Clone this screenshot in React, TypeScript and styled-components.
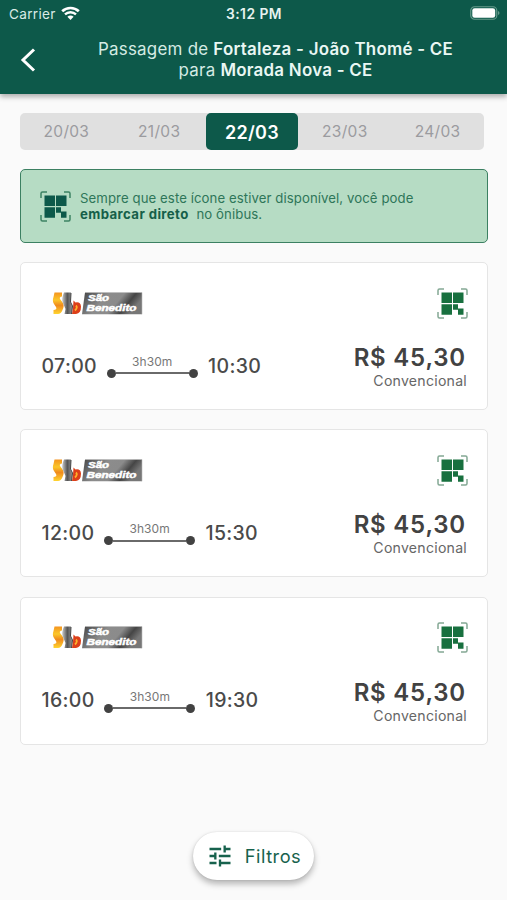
import React from 'react';
import styled, { createGlobalStyle } from 'styled-components';
import { MdTune } from 'react-icons/md';

const GlobalStyle = createGlobalStyle`
  * { box-sizing: border-box; }
  body {
    margin: 0;
    background: #fafafa;
    font-family: Inter, "Liberation Sans", sans-serif;
    color: #424242;
  }
`;

const Screen = styled.div`
  display: flex;
  flex-direction: column;
  width: 507px;
  height: 900px;
  overflow: hidden;
  background: #fafafa;
`;

const Header = styled.header`
  flex: none;
  height: 94px;
  background: #0d594a;
  color: #fff;
  box-shadow: 0 3px 5px rgba(0, 0, 0, 0.3);
`;

const StatusBar = styled.div`
  display: grid;
  grid-template-columns: 1fr auto 1fr;
  align-items: center;
  height: 27px;
  padding: 0 8px 0 9px;
  font-size: 13px;
  line-height: 16px;
`;

const Carrier = styled.div`
  display: flex;
  align-items: center;
  gap: 5.5px;
  font-size: 13.6px;
  letter-spacing: 0.3px;
  color: #d9ebe6;
`;

const Clock = styled.div`
  font-size: 13.8px;
  font-weight: 600;
  letter-spacing: 0.5px;
  color: #e6f3f0;
`;

const BatterySlot = styled.div`
  display: flex;
  justify-content: flex-end;
  margin-top: -1px;
  margin-right: -1px;
`;

const TitleBar = styled.div`
  display: grid;
  grid-template-columns: 55px 1fr 11px;
  align-items: center;
  height: 66px;
`;

const BackButton = styled.button`
  display: flex;
  justify-content: center;
  padding: 0;
  border: 0;
  background: none;
`;

const Title = styled.h1`
  margin: 0;
  padding-bottom: 1px;
  text-align: center;
  font-size: 16.9px;
  font-weight: 400;
  line-height: 21px;
  letter-spacing: 0.26px;
  color: #d5ebe4;
  b { font-weight: 600; color: #e9f7f3; }
`;

const Main = styled.main`
  display: flex;
  flex-direction: column;
  flex: 1;
  padding: 19px 20px 0;
`;

const DateTabs = styled.nav`
  display: grid;
  grid-template-columns: repeat(5, 1fr);
  width: 464px;
  height: 37px;
  background: #e0e0e0;
  border-radius: 5px;
`;

const DateTab = styled.button<{ $active?: boolean }>`
  padding: ${p => (p.$active ? '2px' : '0')} 0 0;
  border: 0;
  border-radius: 5px;
  font-family: inherit;
  background: ${p => (p.$active ? '#0d594a' : 'transparent')};
  color: ${p => (p.$active ? '#fff' : '#9b9b9f')};
  font-size: ${p => (p.$active ? '18px' : '15.5px')};
  font-weight: ${p => (p.$active ? 600 : 400)};
  letter-spacing: 0.3px;
`;

const Notice = styled.section`
  display: flex;
  align-items: center;
  gap: 9px;
  height: 74px;
  margin-top: 19px;
  padding: 0 19px;
  width: 468px;
  border: 1.5px solid #3c8062;
  border-radius: 5px;
  background: #b6dcc4;
  color: #2e7659;
`;

const NoticeText = styled.p`
  margin: 0 0 1px;
  font-size: 13.2px;
  line-height: 16px;
  white-space: nowrap;
  letter-spacing: 0.08px;
  b { font-weight: 700; color: #155f49; margin-right: 4px; letter-spacing: 0.4px; }
`;

const TripList = styled.div`
  display: flex;
  flex-direction: column;
  gap: 19.3px;
  margin-top: 19px;
`;

const TripCard = styled.article`
  width: 468px;
  height: 148px;
  padding: 24px 19px 0 20px;
  border: 1.5px solid #e5e5e5;
  border-radius: 5px;
  background: #fff;
`;

const CardTop = styled.div`
  display: flex;
  justify-content: space-between;
  align-items: center;
  height: 32px;
  padding-left: 10.5px;
`;

const CardBottom = styled.div`
  display: flex;
  justify-content: space-between;
  margin-top: 26px;
`;

const Schedule = styled.div`
  display: flex;
  align-items: flex-start;
  padding: 7.7px 0 0 0.5px;
`;

const Time = styled.span`
  font-size: 19.5px;
  font-weight: 500;
  line-height: 26px;
  letter-spacing: 0.35px;
  color: #4a4a4a;
`;

const Duration = styled.div`
  display: flex;
  flex-direction: column;
  align-items: center;
  width: 91px;
  margin: 2.3px 10.3px 0 9.7px;
  font-size: 12px;
  line-height: 14px;
  letter-spacing: 0.1px;
  color: #777;
`;

const Track = styled.div`
  display: flex;
  align-items: center;
  width: 100%;
  height: 9px;
`;

const Dot = styled.i`
  width: 9px;
  height: 9px;
  border-radius: 50%;
  background: #424242;
`;

const Line = styled.i`
  flex: 1;
  height: 2px;
  background: #6a6a6a;
`;

const Fare = styled.div`
  display: flex;
  flex-direction: column;
  align-items: flex-end;
  padding-top: 1px;
`;

const Price = styled.strong`
  font-size: 24px;
  font-weight: 600;
  line-height: 24px;
  letter-spacing: 0.8px;
  margin-right: 2px;
  color: #424242;
`;

const FareClass = styled.span`
  font-size: 14.1px;
  line-height: 21px;
  letter-spacing: 0.25px;
  margin-right: 1px;
  color: #666;
`;

const FilterButton = styled.button`
  display: flex;
  align-items: center;
  align-self: center;
  justify-content: center;
  gap: 11px;
  width: 121px;
  height: 48px;
  margin-top: 87px;
  padding: 0;
  border: 0;
  border-radius: 24px;
  background: #fff;
  box-shadow: 0 4px 6px rgba(0, 0, 0, 0.28), 0 0 2px rgba(0, 0, 0, 0.12);
  color: #17624d;
  font-family: inherit;
  font-size: 18.2px;
  letter-spacing: 0.5px;
`;

const WifiIcon = () => (
  <svg width="19" height="15" viewBox="0 0 19 15" fill="none" stroke="#fff">
    <path d="M1.2 5.3C5.8.9 13.2.9 17.8 5.3" strokeWidth="2.7" />
    <path d="M4 8.4C7.1 5.5 11.9 5.5 15 8.4" strokeWidth="2.4" />
    <path d="M6.4 10.8C8.2 9.2 10.8 9.2 12.6 10.8L9.5 14Z" fill="#fff" stroke="none" />
  </svg>
);

const BatteryIcon = () => (
  <svg width="30" height="14" viewBox="0 0 30 14">
    <rect x="0.75" y="0.75" width="26" height="12.5" rx="3.8" fill="none" stroke="#659a8b" strokeWidth="1.2" />
    <rect x="2.3" y="2.3" width="22.9" height="9.4" rx="2.3" fill="#fff" />
    <path d="M28 5c2 .8 2 3.2 0 4z" fill="#659a8b" />
  </svg>
);

const BackIcon = () => (
  <svg width="16" height="25" viewBox="0 0 16 25" fill="none" stroke="#fff" strokeWidth="3">
    <path d="M14 1.5L3 12L14 22.5" />
  </svg>
);

const CodeIcon = ({ color, frame }: { color: string; frame: string }) => (
  <svg width="31" height="31" viewBox="0 0 31 31">
    <path
      d="M1 7V2.5Q1 1 2.5 1H7M24 1h4.5Q30 1 30 2.5V7M30 24v4.5Q30 30 28.5 30H24M7 30H2.5Q1 30 1 28.5V24"
      fill="none"
      stroke={frame}
      strokeWidth="1.5"
    />
    <path
      d="M4.5 4.5h10.5v10.5H4.5zM16 4.5h10.5v10.5H16zM4.5 16.2h10.5v10.5H4.5zM16 16.2h5v4.2h5.5v6.3h-5.5v-5H16z"
      fill={color}
    />
  </svg>
);

const CompanyLogo = () => (
  <svg width="91" height="25" viewBox="0 0 91 25" role="img" aria-label="São Benedito">
    <defs>
      <linearGradient id="plate" x1="0" x2="1" y1="0" y2="0.3">
        <stop offset="0" stopColor="#444" />
        <stop offset="0.42" stopColor="#8c8c8c" />
        <stop offset="0.66" stopColor="#8b8b8b" />
        <stop offset="0.84" stopColor="#454545" />
        <stop offset="1" stopColor="#777" />
      </linearGradient>
      <linearGradient id="flame" x1="0" x2="0" y1="0" y2="1">
        <stop offset="0" stopColor="#f4941f" />
        <stop offset="0.35" stopColor="#fbc72b" />
        <stop offset="0.6" stopColor="#f08a1d" />
        <stop offset="1" stopColor="#ffd52f" />
      </linearGradient>
      <linearGradient id="steel" x1="0" x2="1">
        <stop offset="0" stopColor="#c9c9c9" />
        <stop offset="0.5" stopColor="#555" />
        <stop offset="1" stopColor="#999" />
      </linearGradient>
    </defs>
    <path d="M2.5 1.5h7.500v4q-3 .5-2 2.500l3 4q1.500 3-.5 7-1.500 4-4.500 4H1.500v-4q4-.5 2.500-3l-2-3q-2-3-.5-7z" fill="url(#flame)" />
    <path d="M12 1.500h7l-.5 10 2 4-1 7.500h-7l1-5-3-7q-1-4 1.500-9.500z" fill="url(#steel)" />
    <path d="M19 2l-.5 9 2 4-1 8" fill="none" stroke="#444" />
    <path d="M21.500 9.500l2 2q5-1 5.500 4 0 7-5 7.500h-4l1-6z" fill="#dc3f19" />
    <path d="M24 14.500q2 2-1 5" fill="none" stroke="#ffb12b" strokeWidth="1.8" />
    <path d="M33 1.500h57v21.700H30z" fill="url(#plate)" />
    <path d="M33 1.500h57v21.700" fill="none" stroke="#bbb" strokeWidth=".6" />
    <g
      fill="#fff"
      stroke="#fff"
      strokeWidth=".45"
      fontFamily="Liberation Sans, sans-serif"
      fontWeight="700"
      fontStyle="italic"
      fontSize="8.6"
    >
      <text x="36" y="9.8" textLength="21" lengthAdjust="spacingAndGlyphs">São</text>
      <text x="34.5" y="19.7" textLength="50" lengthAdjust="spacingAndGlyphs">Benedito</text>
    </g>
  </svg>
);

const dates = ['20/03', '21/03', '22/03', '23/03', '24/03'];

const trips = [
  { departure: '07:00', arrival: '10:30' },
  { departure: '12:00', arrival: '15:30' },
  { departure: '16:00', arrival: '19:30' },
];

export default function App() {
  return (
    <Screen>
      <GlobalStyle />
      <Header>
        <StatusBar>
          <Carrier>Carrier <WifiIcon /></Carrier>
          <Clock>3:12 PM</Clock>
          <BatterySlot><BatteryIcon /></BatterySlot>
        </StatusBar>
        <TitleBar>
          <BackButton aria-label="Voltar"><BackIcon /></BackButton>
          <Title>
            Passagem de <b>Fortaleza - João Thomé - CE</b><br />
            para <b>Morada Nova - CE</b>
          </Title>
        </TitleBar>
      </Header>
      <Main>
        <DateTabs>
          {dates.map(date => (
            <DateTab key={date} $active={date === '22/03'}>{date}</DateTab>
          ))}
        </DateTabs>
        <Notice>
          <CodeIcon color="#0d594a" frame="#3d8263" />
          <NoticeText>
            Sempre que este ícone estiver disponível, você pode<br />
            <b>embarcar direto</b> no ônibus.
          </NoticeText>
        </Notice>
        <TripList>
          {trips.map(trip => (
            <TripCard key={trip.departure}>
              <CardTop>
                <CompanyLogo />
                <CodeIcon color="#18703f" frame="#84a894" />
              </CardTop>
              <CardBottom>
                <Schedule>
                  <Time>{trip.departure}</Time>
                  <Duration>
                    3h30m
                    <Track><Dot /><Line /><Dot /></Track>
                  </Duration>
                  <Time>{trip.arrival}</Time>
                </Schedule>
                <Fare>
                  <Price>R$ 45,30</Price>
                  <FareClass>Convencional</FareClass>
                </Fare>
              </CardBottom>
            </TripCard>
          ))}
        </TripList>
        <FilterButton><MdTune size={28} />Filtros</FilterButton>
      </Main>
    </Screen>
  );
}
